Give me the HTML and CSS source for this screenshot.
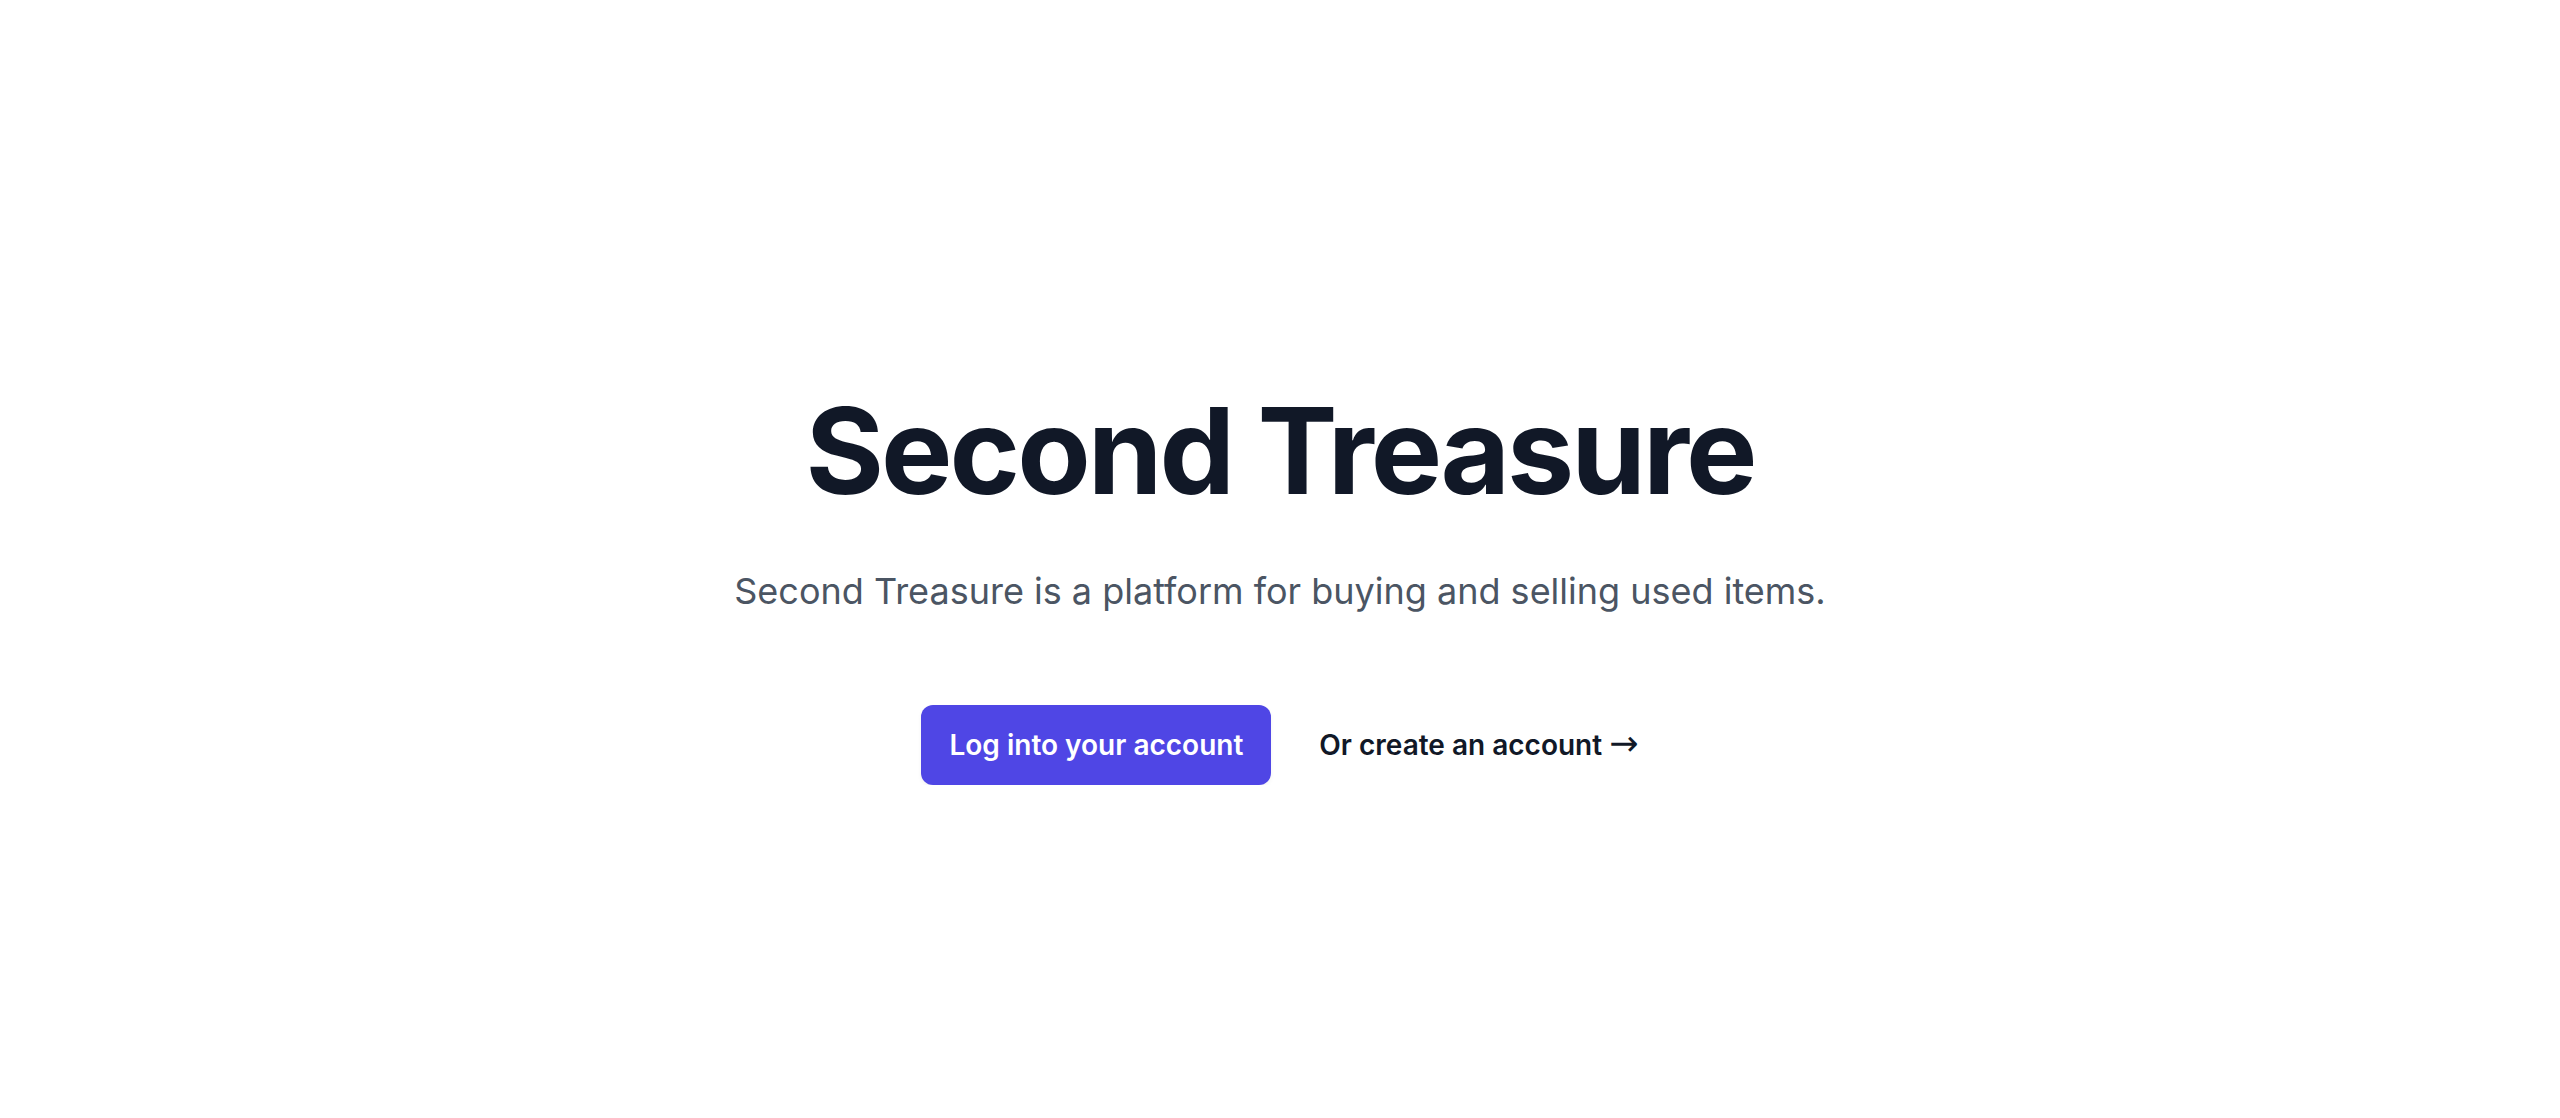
FILE: index.html
```html
<!DOCTYPE html>
<html lang="en">
<head>
<meta charset="utf-8">
<title>Second Treasure</title>
<link rel="stylesheet" href="styles.css">
</head>
<body>
<main class="hero">
  <h1 class="title">Second Treasure</h1>
  <p class="lead">Second Treasure is a platform for buying and selling used items.</p>
  <div class="actions">
    <a class="btn-primary" href="#">Log into your account</a>
    <a class="link" href="#">Or create an account <span class="arrow">→</span></a>
  </div>
</main>
</body>
</html>
```
FILE: styles.css
```css
* { box-sizing: border-box; }
html, body {
  margin: 0;
  padding: 0;
  background: #ffffff;
}
body {
  font-family: Inter, "Noto Sans", "Liberation Sans", sans-serif;
  color: #111827;
}
.hero {
  display: flex;
  flex-direction: column;
  align-items: center;
  text-align: center;
  padding-top: 391px;
}
.title {
  margin: 0;
  font-size: 120px;
  line-height: 120px;
  font-weight: 700;
  letter-spacing: -3px;
  color: #111827;
}
.lead {
  margin: 48px 0 0;
  font-size: 36px;
  line-height: 64px;
  color: #4b5563;
}
.actions {
  margin-top: 82px;
  display: flex;
  align-items: center;
  justify-content: center;
  gap: 48px;
}
.btn-primary {
  display: block;
  background: #4f46e5;
  color: #ffffff;
  border-radius: 12px;
  padding: 20px 28px;
  font-size: 28px;
  line-height: 40px;
  font-weight: 600;
  text-decoration: none;
  box-shadow: 0 2px 4px rgba(0, 0, 0, 0.05);
}
.link {
  font-size: 28px;
  line-height: 48px;
  font-weight: 600;
  color: #111827;
  text-decoration: none;
}
.arrow {
  font-family: "DejaVu Sans", sans-serif;
  font-weight: 400;
  font-size: 35px;
  line-height: 0;
}
```
